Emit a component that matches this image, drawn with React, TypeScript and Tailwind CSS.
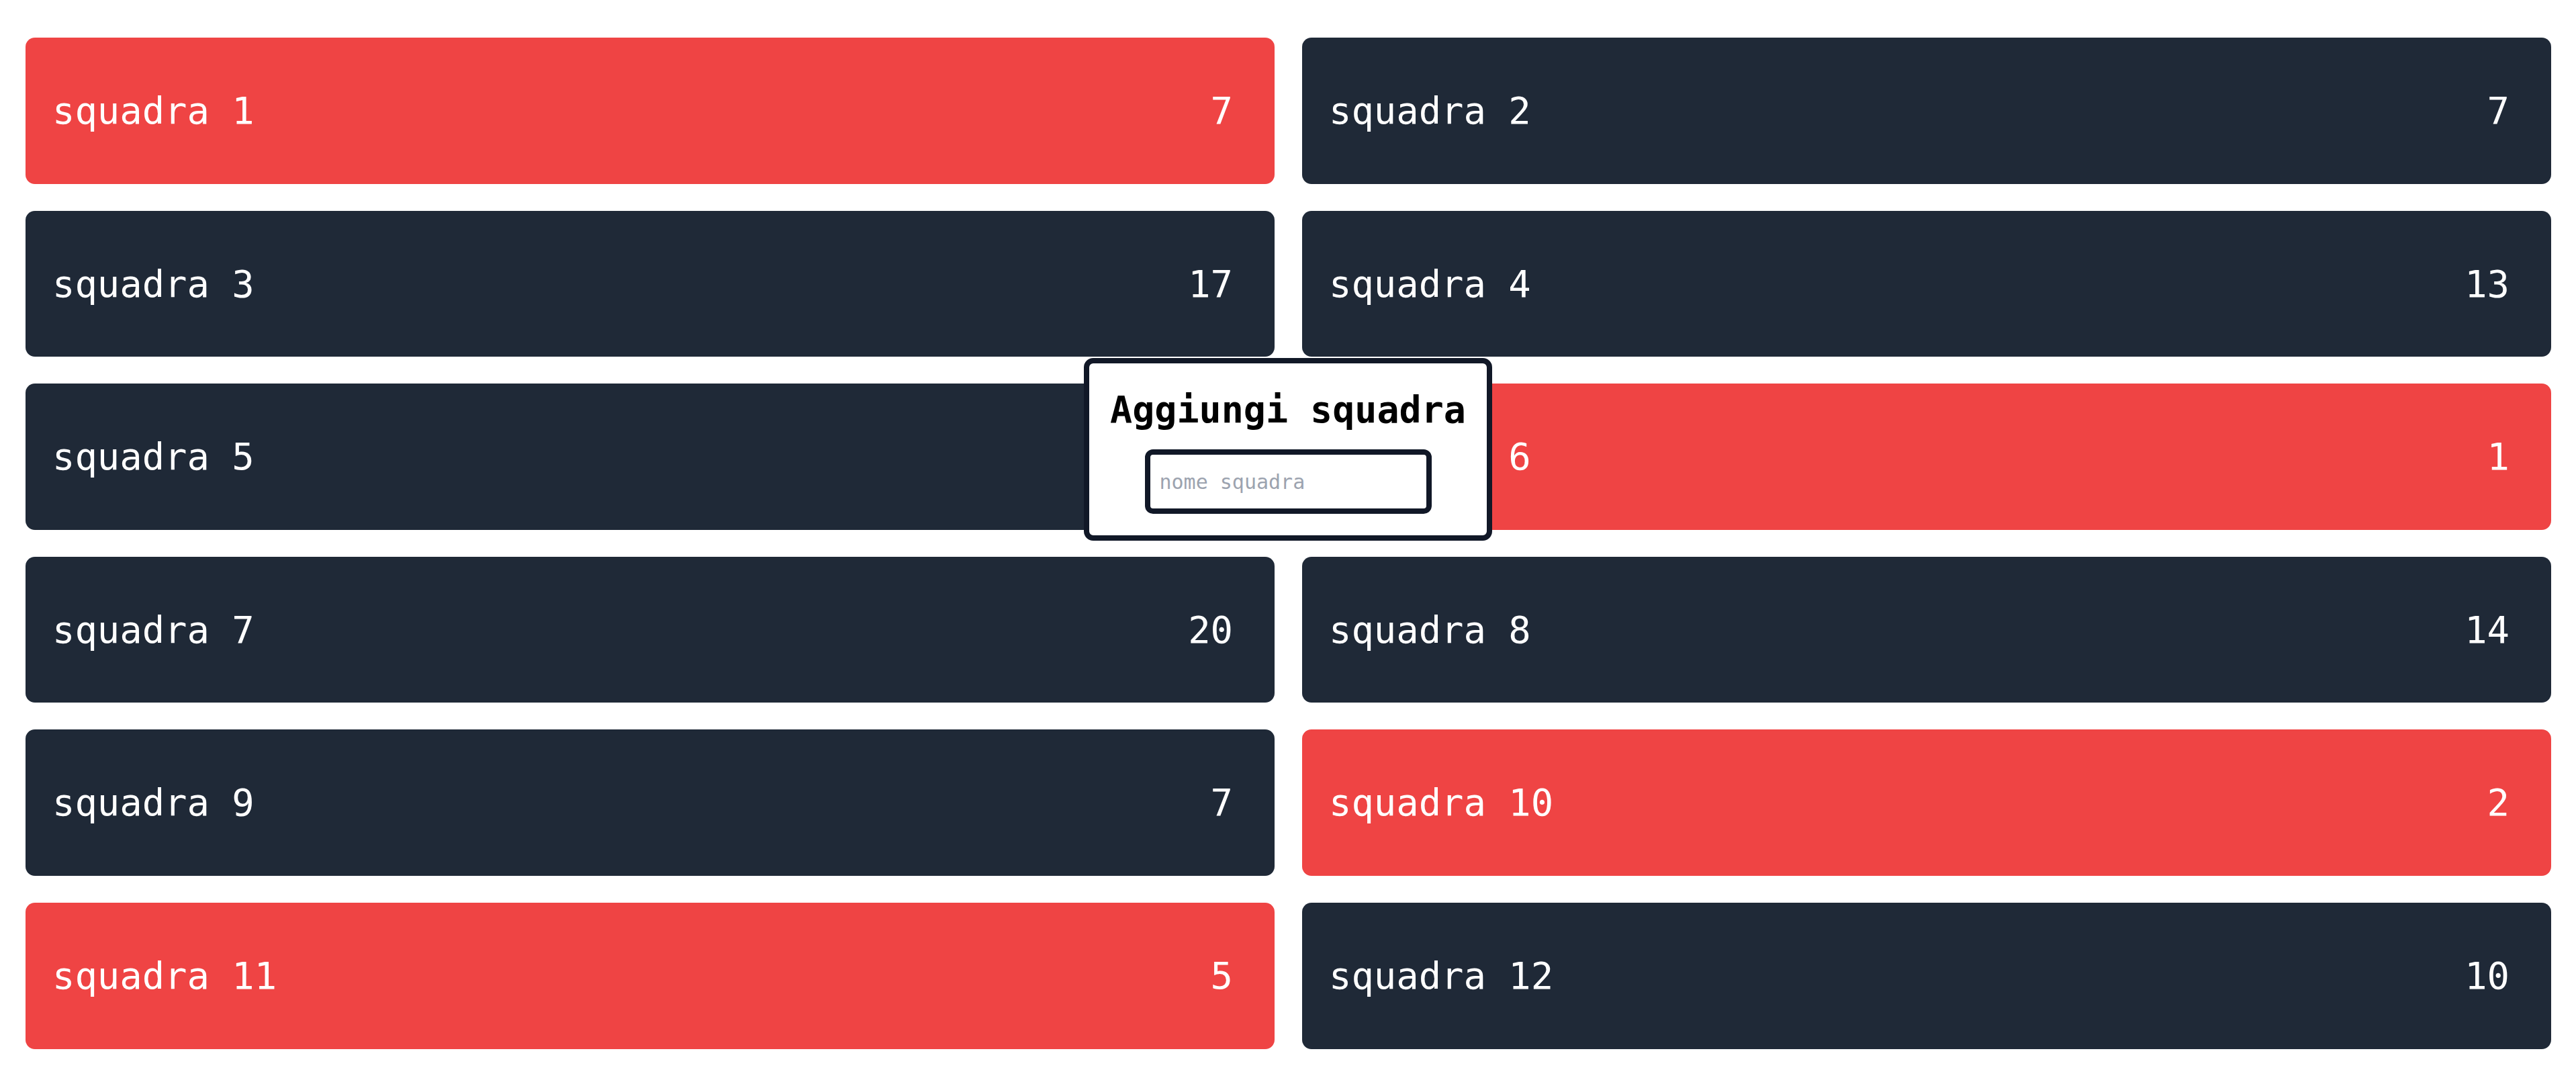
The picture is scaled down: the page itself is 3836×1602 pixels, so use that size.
import React from "react";

type Team = { name: string; score: number; red: boolean };

const teams: Team[] = [
  { name: "squadra 1", score: 7, red: true },
  { name: "squadra 2", score: 7, red: false },
  { name: "squadra 3", score: 17, red: false },
  { name: "squadra 4", score: 13, red: false },
  { name: "squadra 5", score: 9, red: false },
  { name: "squadra 6", score: 1, red: true },
  { name: "squadra 7", score: 20, red: false },
  { name: "squadra 8", score: 14, red: false },
  { name: "squadra 9", score: 7, red: false },
  { name: "squadra 10", score: 2, red: true },
  { name: "squadra 11", score: 5, red: true },
  { name: "squadra 12", score: 10, red: false },
];

export default function App() {
  return (
    <div className="relative min-h-screen bg-white pt-[56px] pl-[38px] pr-[37px] font-['DejaVu_Sans_Mono',monospace]">
      <div className="grid grid-cols-2 gap-x-[41px] gap-y-[40px]">
        {teams.map((t) => (
          <div
            key={t.name}
            className={
              (t.red ? "bg-[#ef4444]" : "bg-[#1f2937]") +
              " flex h-[217.6px] items-center justify-between rounded-[14px] pl-[40px] pr-[62px] text-[55.5px] leading-none text-white"
            }
          >
            <span>{t.name}</span>
            <span>{t.score}</span>
          </div>
        ))}
      </div>

      <div className="absolute left-1/2 top-[533px] flex h-[272px] w-[608px] -translate-x-1/2 flex-col items-center rounded-[14px] border-[8px] border-[#111827] bg-white pt-[42px]">
        <h2 className="h-[55px] text-[55px] font-bold leading-none text-black">
          Aggiungi squadra
        </h2>
        <input
          type="text"
          placeholder="nome squadra"
          className="mt-[31px] h-[96px] w-[427px] rounded-xl border-[8px] border-[#111827] bg-white px-[14px] text-[30px] text-black outline-none placeholder:text-[#9ca3af] font-['DejaVu_Sans_Mono',monospace]"
        />
      </div>
    </div>
  );
}
